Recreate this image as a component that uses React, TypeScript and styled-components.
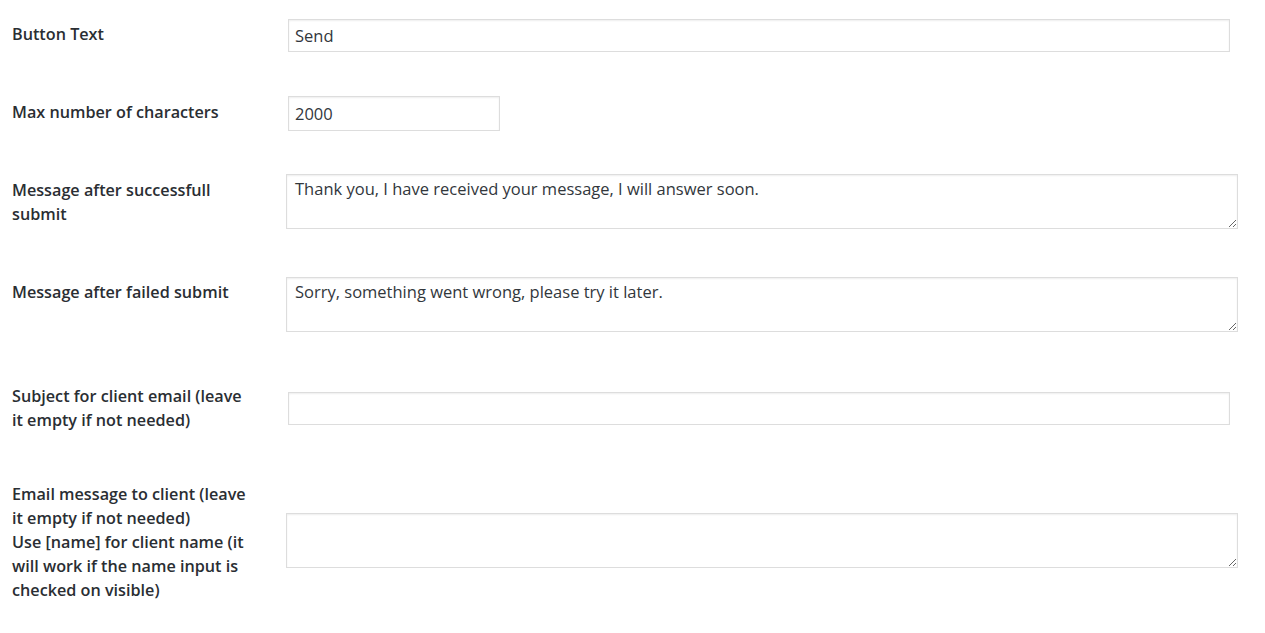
import { createGlobalStyle, styled } from "styled-components"

const GlobalStyle = createGlobalStyle`
  html, body {
    margin: 0;
    padding: 0;
    background: #fff;
  }
  body {
    font-family: "Open Sans", "Noto Sans", sans-serif;
    color: #23282d;
  }
`

const FormTable = styled.div`
  display: flex;
  flex-direction: column;
  padding-top: 19px;
`

const Row = styled.div<{ $top?: boolean; $gap: number }>`
  display: flex;
  align-items: ${(p) => (p.$top ? "flex-start" : "center")};
  margin-top: ${(p) => p.$gap}px;
`

// $lift raises a centred label, $offset pushes it down
const Label = styled.label<{ $offset?: number; $lift?: number }>`
  flex: 0 0 274px;
  box-sizing: border-box;
  padding-left: 12px;
  padding-top: ${(p) => p.$offset ?? 0}px;
  padding-bottom: ${(p) => (p.$lift ?? 0) * 2}px;
  font-size: 16.2px;
  font-weight: 600;
  line-height: 24px;
  color: #2a2e33;
`

const Field = styled.div<{ $inset: number }>`
  padding-left: ${(p) => p.$inset}px;
  display: flex;
`

const TextInput = styled.input<{ $width: number; $height?: number }>`
  box-sizing: border-box;
  width: ${(p) => p.$width}px;
  height: ${(p) => p.$height ?? 33}px;
  margin: 0;
  padding: 3px 6px;
  border: 1px solid #ddd;
  box-shadow: inset 0 1px 2px rgba(0, 0, 0, 0.07);
  background: #fff;
  font-family: "Open Sans", "Noto Sans", sans-serif;
  font-size: 16.5px;
  color: #32373c;
  outline: none;
`

const TextArea = styled.textarea`
  box-sizing: border-box;
  width: 952px;
  height: 55px;
  margin: 0;
  padding: 2px 8px;
  border: 1px solid #ddd;
  box-shadow: inset 0 1px 2px rgba(0, 0, 0, 0.07);
  background: #fff;
  font-family: "Open Sans", "Noto Sans", sans-serif;
  font-size: 16.5px;
  line-height: 24px;
  color: #32373c;
  outline: none;
  display: block;
`

export default function App() {
  return (
    <>
      <GlobalStyle />
      <FormTable>
        <Row $gap={0}>
          <Label $lift={2}>Button Text</Label>
          <Field $inset={14}>
            <TextInput $width={942} defaultValue="Send" />
          </Field>
        </Row>
        <Row $gap={44}>
          <Label $lift={2}>Max number of characters</Label>
          <Field $inset={14}>
            <TextInput $width={212} $height={35} defaultValue="2000" />
          </Field>
        </Row>
        <Row $gap={43}>
          <Label>
            Message after successfull
            <br />
            submit
          </Label>
          <Field $inset={12}>
            <TextArea defaultValue="Thank you, I have received your message, I will answer soon." />
          </Field>
        </Row>
        <Row $gap={48} $top>
          <Label $offset={3}>Message after failed submit</Label>
          <Field $inset={12}>
            <TextArea defaultValue="Sorry, something went wrong, please try it later." />
          </Field>
        </Row>
        <Row $gap={52}>
          <Label>
            Subject for client email (leave
            <br />
            it empty if not needed)
          </Label>
          <Field $inset={14}>
            <TextInput $width={942} defaultValue="" />
          </Field>
        </Row>
        <Row $gap={46}>
          <Label $offset={4}>
            Email message to client (leave
            <br />
            it empty if not needed)
            <br />
            Use [name] for client name (it
            <br />
            will work if the name input is
            <br />
            checked on visible)
          </Label>
          <Field $inset={12}>
            <TextArea defaultValue="" />
          </Field>
        </Row>
      </FormTable>
    </>
  )
}
